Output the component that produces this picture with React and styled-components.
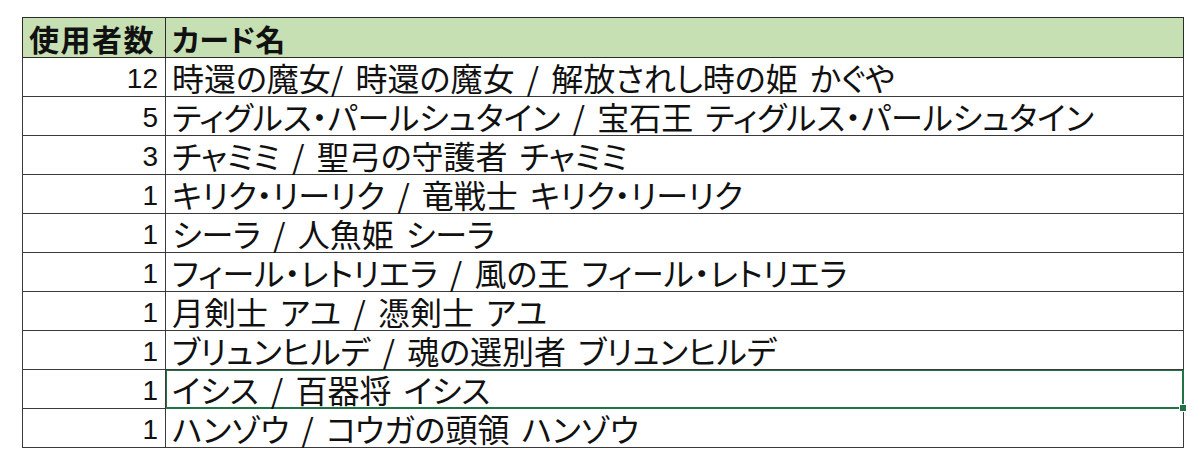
import React from "react";
import styled, { createGlobalStyle } from "styled-components";

const GlobalStyle = createGlobalStyle`
  html, body {
    margin: 0;
    padding: 0;
    background: #ffffff;
  }
`;

const rows = [
  { count: 12, name: "時還の魔女/ 時還の魔女 / 解放されし時の姫 かぐや" },
  { count: 5, name: "ティグルス・パールシュタイン / 宝石王 ティグルス・パールシュタイン" },
  { count: 3, name: "チャミミ / 聖弓の守護者 チャミミ" },
  { count: 1, name: "キリク・リーリク / 竜戦士 キリク・リーリク" },
  { count: 1, name: "シーラ / 人魚姫 シーラ" },
  { count: 1, name: "フィール・レトリエラ / 風の王 フィール・レトリエラ" },
  { count: 1, name: "月剣士 アユ / 憑剣士 アユ" },
  { count: 1, name: "ブリュンヒルデ / 魂の選別者 ブリュンヒルデ" },
  { count: 1, name: "イシス / 百器将 イシス", selected: true },
  { count: 1, name: "ハンゾウ / コウガの頭領 ハンゾウ" },
];

const Page = styled.div`
  padding: 17px 0 0 22px;
  width: 1200px;
  height: 465px;
  box-sizing: border-box;
`;

const Sheet = styled.table`
  border-collapse: collapse;
  table-layout: fixed;
  width: 1162px;
  font-family: "Noto Sans CJK JP", "Liberation Sans", sans-serif;
  color: #111;
`;

const HeadCell = styled.th`
  background: #c6e0b4;
  border: 1px solid #2b2b2b;
  height: 39px;
  padding: 0 0 0 6px;
  text-align: left;
  font-size: 30px;
  font-weight: 700;
  line-height: 38px;
  vertical-align: bottom;
  white-space: nowrap;
  letter-spacing: ${(p) => (p.$first ? "1.5px" : "0")};
  font-feature-settings: "palt";
`;

const CountCell = styled.td`
  border: 1px solid #3a3a3a;
  height: 38px;
  padding: 0 7px 0 0;
  text-align: right;
  font-family: "Liberation Sans Narrow", "Liberation Sans", sans-serif;
  font-size: 28px;
  line-height: 35px;
  vertical-align: bottom;
`;

const NameCell = styled.td`
  position: relative;
  border: 1px solid ${(p) => (p.$selected ? "#217346" : "#3a3a3a")};
  height: 38px;
  padding: 0 0 0 6px;
  font-size: 32px;
  line-height: 37px;
  vertical-align: bottom;
  white-space: nowrap;
  font-feature-settings: "palt";
  word-spacing: 5px;
  box-shadow: ${(p) => (p.$selected ? "inset 0 0 0 1px #217346" : "none")};

  &::after {
    content: "";
    display: ${(p) => (p.$selected ? "block" : "none")};
    position: absolute;
    right: -4px;
    bottom: -4px;
    width: 6px;
    height: 6px;
    background: #217346;
    border: 1px solid #ffffff;
  }
`;

export default function App() {
  return (
    <Page>
      <GlobalStyle />
      <Sheet>
        <colgroup>
          <col style={{ width: 143 }} />
          <col />
        </colgroup>
        <thead>
          <tr>
            <HeadCell $first>使用者数</HeadCell>
            <HeadCell>カード名</HeadCell>
          </tr>
        </thead>
        <tbody>
          {rows.map((r, i) => (
            <tr key={i}>
              <CountCell>{r.count}</CountCell>
              <NameCell $selected={r.selected}>{r.name}</NameCell>
            </tr>
          ))}
        </tbody>
      </Sheet>
    </Page>
  );
}
